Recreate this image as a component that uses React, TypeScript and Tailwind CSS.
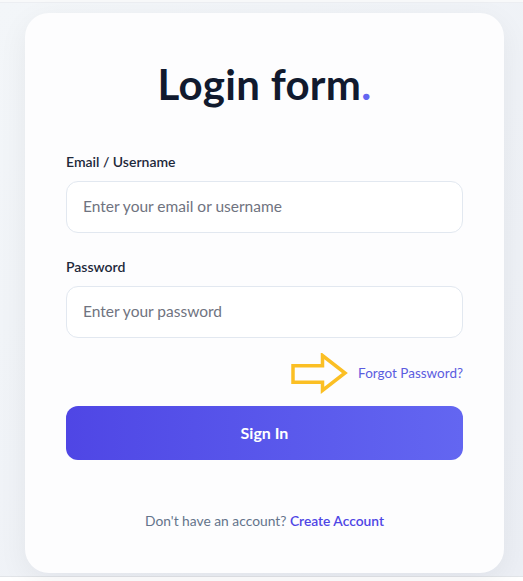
import React from "react";

function HintArrow() {
  return (
    <svg width="58" height="42" viewBox="0 0 58 42" className="shrink-0">
      <polygon
        points="2,12.75 31.5,12.75 31.5,2.5 54,20 31.5,37.5 31.5,29.25 2,29.25"
        fill="none"
        stroke="#fbbf24"
        strokeWidth="3.5"
        strokeLinejoin="miter"
      />
    </svg>
  );
}

export default function App() {
  return (
    <div
      className="w-[523px] h-[581px] flex flex-col bg-white"
      style={{ fontFamily: "Lato, 'Noto Sans', sans-serif" }}
    >
      <div className="h-[3px] bg-[#f8f9fa] border-b border-[#eceef2]" />

      {/* PAGE */}
      <div className="h-[574px] pt-[10px] pl-[25px] bg-gradient-to-br from-[#f3f6f9] to-[#eceff5] border-b border-[#e1e4e8]">
        {/* CARD */}
        <div className="w-[479px] h-[560px] rounded-[24px] bg-[#fdfdfe] shadow-[0_8px_30px_rgba(15,23,42,0.06)] px-[41px] pt-[47px] flex flex-col">
          <h1 className="text-center text-[42px] leading-[48px] font-bold text-[#111a2e] tracking-[0.3px]">
            Login form<span className="text-[#6366f1]">.</span>
          </h1>

          <label className="mt-[44px] text-[14px] leading-[20px] font-semibold text-[#1e293b]">
            Email / Username
          </label>
          <input
            type="text"
            placeholder="Enter your email or username"
            className="mt-[9px] h-[52px] w-full rounded-[12px] border border-[#e2e8f0] bg-white px-[16px] pb-[2px] text-[15.5px] text-[#1e293b] placeholder:text-[#6f7380] outline-none"
          />

          <label className="mt-[24px] text-[14px] leading-[20px] font-semibold text-[#1e293b]">
            Password
          </label>
          <input
            type="password"
            placeholder="Enter your password"
            className="mt-[9px] h-[52px] w-full rounded-[12px] border border-[#e2e8f0] bg-white px-[16px] pb-[2px] text-[15.5px] text-[#1e293b] placeholder:text-[#6f7380] outline-none"
          />

          <div className="mt-[16px] h-[40px] flex items-center justify-end gap-[9px]">
            <HintArrow />
            <a className="text-[13.5px] leading-[20px] text-[#5b5ce0] -mt-[3px]">
              Forgot Password?
            </a>
          </div>

          <button className="mt-[12px] h-[54px] w-full rounded-[12px] bg-gradient-to-r from-[#4f46e5] to-[#6366f1] text-white text-[16px] font-bold">
            Sign In
          </button>

          <p className="mt-[51px] text-center text-[13.8px] leading-[20px] text-[#64748b]">
            Don't have an account?{" "}
            <a className="font-semibold text-[#4f46e5]">Create Account</a>
          </p>
        </div>
      </div>
    </div>
  );
}
